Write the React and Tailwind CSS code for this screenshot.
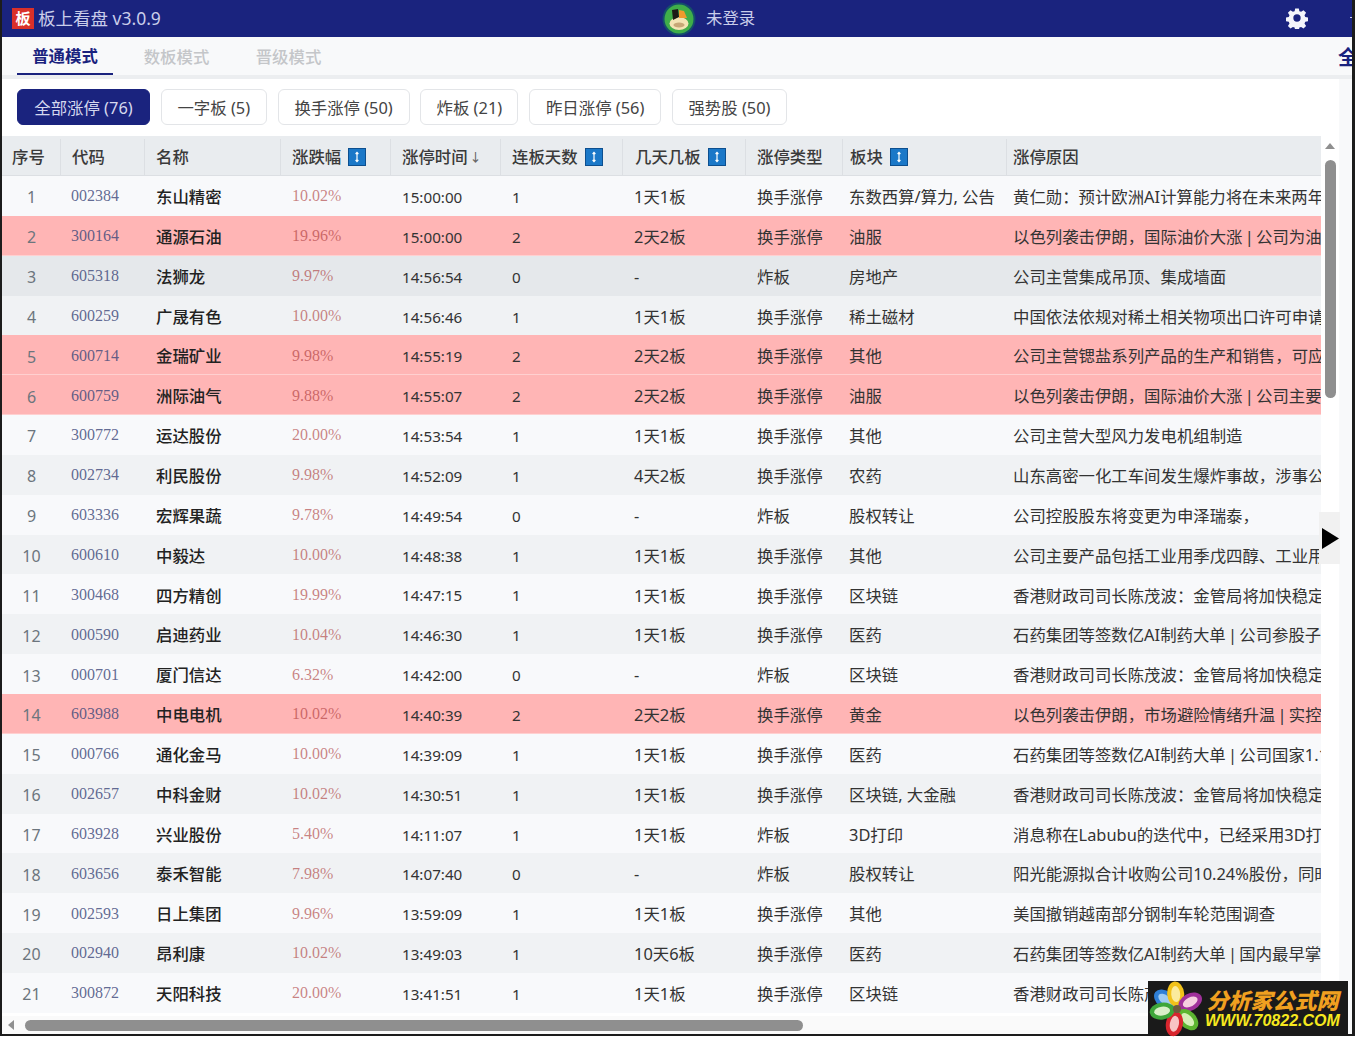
import React from 'react';

const COLS = 'grid grid-cols-[59px_84px_136px_110px_110px_122px_123px_97px_164px_314px]';

const rows = [
  [1, '002384', '东山精密', '10.02%', '15:00:00', 1, '1天1板', '换手涨停', '东数西算/算力, 公告', '黄仁勋：预计欧洲AI计算能力将在未来两年增长十倍'],
  [2, '300164', '通源石油', '19.96%', '15:00:00', 2, '2天2板', '换手涨停', '油服', '以色列袭击伊朗，国际油价大涨 | 公司为油服企业'],
  [3, '605318', '法狮龙', '9.97%', '14:56:54', 0, '-', '炸板', '房地产', '公司主营集成吊顶、集成墙面'],
  [4, '600259', '广晟有色', '10.00%', '14:56:46', 1, '1天1板', '换手涨停', '稀土磁材', '中国依法依规对稀土相关物项出口许可申请进行审批'],
  [5, '600714', '金瑞矿业', '9.98%', '14:55:19', 2, '2天2板', '换手涨停', '其他', '公司主营锶盐系列产品的生产和销售，可应用于'],
  [6, '600759', '洲际油气', '9.88%', '14:55:07', 2, '2天2板', '换手涨停', '油服', '以色列袭击伊朗，国际油价大涨 | 公司主要从事'],
  [7, '300772', '运达股份', '20.00%', '14:53:54', 1, '1天1板', '换手涨停', '其他', '公司主营大型风力发电机组制造'],
  [8, '002734', '利民股份', '9.98%', '14:52:09', 1, '4天2板', '换手涨停', '农药', '山东高密一化工车间发生爆炸事故，涉事公司停产'],
  [9, '603336', '宏辉果蔬', '9.78%', '14:49:54', 0, '-', '炸板', '股权转让', '公司控股股东将变更为申泽瑞泰，'],
  [10, '600610', '中毅达', '10.00%', '14:48:38', 1, '1天1板', '换手涨停', '其他', '公司主要产品包括工业用季戊四醇、工业用甲醛'],
  [11, '300468', '四方精创', '19.99%', '14:47:15', 1, '1天1板', '换手涨停', '区块链', '香港财政司司长陈茂波：金管局将加快稳定币发牌'],
  [12, '000590', '启迪药业', '10.04%', '14:46:30', 1, '1天1板', '换手涨停', '医药', '石药集团等签数亿AI制药大单 | 公司参股子公司'],
  [13, '000701', '厦门信达', '6.32%', '14:42:00', 0, '-', '炸板', '区块链', '香港财政司司长陈茂波：金管局将加快稳定币发牌'],
  [14, '603988', '中电电机', '10.02%', '14:40:39', 2, '2天2板', '换手涨停', '黄金', '以色列袭击伊朗，市场避险情绪升温 | 实控人变更'],
  [15, '000766', '通化金马', '10.00%', '14:39:09', 1, '1天1板', '换手涨停', '医药', '石药集团等签数亿AI制药大单 | 公司国家1.1类新药'],
  [16, '002657', '中科金财', '10.02%', '14:30:51', 1, '1天1板', '换手涨停', '区块链, 大金融', '香港财政司司长陈茂波：金管局将加快稳定币发牌'],
  [17, '603928', '兴业股份', '5.40%', '14:11:07', 1, '1天1板', '炸板', '3D打印', '消息称在Labubu的迭代中，已经采用3D打印技术'],
  [18, '603656', '泰禾智能', '7.98%', '14:07:40', 0, '-', '炸板', '股权转让', '阳光能源拟合计收购公司10.24%股份，同时实控人'],
  [19, '002593', '日上集团', '9.96%', '13:59:09', 1, '1天1板', '换手涨停', '其他', '美国撤销越南部分钢制车轮范围调查'],
  [20, '002940', '昂利康', '10.02%', '13:49:03', 1, '10天6板', '换手涨停', '医药', '石药集团等签数亿AI制药大单 | 国内最早掌握该技术'],
  [21, '300872', '天阳科技', '20.00%', '13:41:51', 1, '1天1板', '换手涨停', '区块链', '香港财政司司长陈茂波：金管局将加快稳定币发牌'],
];

const PINK = [2, 5, 6, 14];

const filters = [
  ['全部涨停 (76)', 'w-[133px]', true],
  ['一字板 (5)', 'w-[106px]'],
  ['换手涨停 (50)', 'w-[132px]'],
  ['炸板 (21)', 'w-[98px]'],
  ['昨日涨停 (56)', 'w-[132px]'],
  ['强势股 (50)', 'w-[115px]'],
];

const SortIcon = () => (
  <svg width="18" height="18" viewBox="0 0 18 18" className="ml-[7px] shrink-0 -mt-[2px]">
    <rect x="0.5" y="0.5" width="17" height="17" fill="#1b78c8" stroke="#0d4f8f" />
    <path d="M9 4.5V13.5M7.6 6 9 4.5 10.4 6M7.6 12 9 13.5 10.4 12" fill="none" stroke="#fff" strokeWidth="1.2" />
  </svg>
);

const Gear = () => (
  <svg width="22" height="22" viewBox="0 0 24 24" fill="#f4f5fb">
    <path fillRule="evenodd" d="M10 1.5h4l.6 3 1.9.8 2.6-1.7 2.8 2.8-1.7 2.6.8 1.9 3 .6v4l-3 .6-.8 1.9 1.7 2.6-2.8 2.8-2.6-1.7-1.9.8-.6 3h-4l-.6-3-1.9-.8-2.6 1.7-2.8-2.8 1.7-2.6-.8-1.9-3-.6v-4l3-.6.8-1.9-1.7-2.6 2.8-2.8 2.6 1.7 1.9-.8zM12 8a4 4 0 1 0 0 8 4 4 0 0 0 0-8z" />
  </svg>
);

const Avatar = () => (
  <svg width="34" height="34" viewBox="0 0 34 34">
    <circle cx="17" cy="17" r="16.5" fill="#14506a" />
    <circle cx="17" cy="17" r="14.5" fill="#3fae49" />
    <ellipse cx="17" cy="21.5" rx="9.5" ry="6.5" fill="#f3e3b4" />
    <path d="M10 8l6-1 1 8-6 3z" fill="#1c1a16" />
    <path d="M17 8l5 1 3 7-8 0z" fill="#ef9a2d" />
    <ellipse cx="17" cy="23" rx="5.5" ry="2.6" fill="#c7a777" />
  </svg>
);

const Flower = () => (
  <svg width="56" height="56" viewBox="-28 -28 56 56" className="shrink-0">
    {[
      [-52, '#2f7fd6', '#9ecbf2'],
      [-5, '#f2c21a', '#fbeb9c'],
      [62, '#a0309a', '#f6cfe0'],
      [135, '#5cb531', '#d6efb8'],
      [190, '#d8262e', '#f8c4c4'],
      [262, '#3ea63a', '#d9f0c8'],
    ].map(([angle, outer, inner]) => (
      <g key={angle} transform={`rotate(${angle})`}>
        <ellipse cx="0" cy="-15" rx="8.5" ry="12.5" fill={outer} />
        <ellipse cx="0" cy="-15" rx="4.5" ry="8" fill={inner} />
      </g>
    ))}
    <circle r="4" fill="#6d5b3d" />
  </svg>
);

export default function App() {
  return (
    <div className="relative w-[1358px] h-[1039px] overflow-hidden bg-white font-['Noto_Sans','Noto_Sans_CJK_SC',sans-serif] text-[16.4px] text-[#333]">
      <div className="relative flex flex-col w-[1355px] h-[1036px] border-l-2 border-r-[3px] border-b-2 border-[#1c1c1c] overflow-hidden">
        {/* Title bar */}
        <div className="flex items-center h-[37px] shrink-0 bg-[#1a237e] text-[#c9cdea]">
          <div className="flex items-center w-[660px] pl-[10px] pb-[1px]">
            <span className="flex items-center justify-center w-[22px] h-[21px] bg-[#d9302a] text-white text-[15px] font-bold leading-none">板</span>
            <span className="ml-[4px] text-[17.5px] whitespace-nowrap">板上看盘 v3.0.9</span>
          </div>
          <Avatar />
          <span className="ml-[10px]">未登录</span>
          <div className="flex-1 flex justify-end items-center pb-[2px]">
            <Gear />
            <span className="ml-[42px] w-[2px] h-[1px] bg-[#c9cdea]" />
          </div>
        </div>

        {/* Mode tabs */}
        <div className="flex h-[38px] shrink-0 pl-[15px] gap-[15px] bg-[#f8f9fa] font-medium">
          <div className="w-[96px] pt-[3px] flex items-center justify-center text-[#1a237e] border-b-2 border-[#1a237e] font-bold">普通模式</div>
          <div className="w-[97px] pt-[3px] flex items-center justify-center text-[#c4c6c9]">数板模式</div>
          <div className="w-[97px] pt-[3px] flex items-center justify-center text-[#c4c6c9]">晋级模式</div>
          <div className="flex-1" />
          <div className="w-[14px] pt-[3px] -ml-[2px] overflow-hidden flex items-center whitespace-nowrap text-[#1a237e] font-bold text-[20px]">全部</div>
        </div>
        <div className="h-[4px] shrink-0 bg-[#eceef0]" />

        <div className="flex flex-1 min-h-0">
          <div className="flex flex-col w-[1337px] bg-white">
            {/* Filters */}
            <div className="flex h-[57px] shrink-0 items-start pt-[10px] pl-[15px] gap-[10.8px]">
              {filters.map(([label, width, active]) => (
                <div
                  key={label}
                  className={`${width} h-[36px] pt-[2px] flex items-center justify-center rounded-[6px] border whitespace-nowrap ${
                    active ? 'bg-[#1a237e] border-[#1a237e] text-[#d5d8ee]' : 'bg-white border-[#e3e5e8] text-[#444]'
                  }`}
                >
                  {label}
                </div>
              ))}
            </div>

            <div className="flex flex-1 min-h-0">
              {/* Table */}
              <div className="w-[1319px] overflow-hidden">
                <div className={`${COLS} h-[40px] pt-[3px] bg-[#e9ecef] shadow-[inset_0_-1px_0_#dcdfe3] font-medium text-[#3a3a3a]`}>
                  <HeaderCell className="pl-[10px]">序号</HeaderCell>
                  <HeaderCell>代码</HeaderCell>
                  <HeaderCell>名称</HeaderCell>
                  <HeaderCell sort>涨跌幅</HeaderCell>
                  <HeaderCell>
                    涨停时间<span className="ml-[2px] text-[12px] text-[#666]">↓</span>
                  </HeaderCell>
                  <HeaderCell sort>连板天数</HeaderCell>
                  <HeaderCell sort className="pl-[12px]">几天几板</HeaderCell>
                  <HeaderCell>涨停类型</HeaderCell>
                  <HeaderCell sort className="pl-[7px]">板块</HeaderCell>
                  <HeaderCell last>涨停原因</HeaderCell>
                </div>
                {rows.map((r) => {
                  const pink = PINK.includes(r[0]);
                  const bg = pink
                    ? 'bg-[#ffb5b5] shadow-[inset_0_-1px_0_#ffd0d0]'
                    : r[0] === 3
                      ? 'bg-[#e5e8eb]'
                      : r[0] % 2 === 0
                        ? 'bg-[#f0f2f4]'
                        : 'bg-[#f8f9fb]';
                  return (
                    <div key={r[0]} className={`${COLS} h-[39.85px] pt-[3px] items-center whitespace-nowrap ${bg}`}>
                      <div className="text-center text-[16px] text-[#6c757d]">{r[0]}</div>
                      <div className="pl-[10px] -mt-[2px] text-[16px] font-['Liberation_Serif',serif] text-[#3a4578]/80">{r[1]}</div>
                      <div className="pl-[11px] font-medium text-[#222]">{r[2]}</div>
                      <div className="pl-[11px] -mt-[2px] text-[16px] font-['Liberation_Serif',serif] text-[#a83232]/60">{r[3]}</div>
                      <div className="pl-[11px] text-[15.2px]">{r[4]}</div>
                      <div className="pl-[11px] text-[15.2px]">{r[5]}</div>
                      <div className="pl-[11px]">{r[6]}</div>
                      <div className="pl-[11px]">{r[7]}</div>
                      <div className="pl-[6px]">{r[8]}</div>
                      <div className="pl-[6px] overflow-hidden [word-spacing:-2px]">{r[9]}</div>
                    </div>
                  );
                })}
              </div>

              {/* Vertical scrollbar */}
              <div className="flex flex-1 flex-col items-center pt-[7px]">
                <div className="w-0 h-0 border-x-[5px] border-x-transparent border-b-[6px] border-b-[#8f8f8f]" />
                <div className="mt-[11px] w-[11px] h-[238px] rounded-full bg-[#8f8f8f]" />
              </div>
            </div>

            {/* Horizontal scrollbar */}
            <div className="flex items-center h-[18px] shrink-0 pl-[6px] bg-[#fafafa]">
              <div className="w-0 h-0 border-y-[5px] border-y-transparent border-r-[6px] border-r-[#8f8f8f]" />
              <div className="ml-[11px] w-[778px] h-[11px] rounded-full bg-[#8f8f8f]" />
            </div>
          </div>
          <div className="flex-1 bg-[#f8f9fa]" />
        </div>

        {/* Side panel toggle */}
        <div className="absolute left-[1317px] top-[512px] w-[21px] h-[52px] pl-[2px] flex items-center justify-center bg-[#f1f1f1]">
          <svg width="17" height="21" viewBox="0 0 17 21">
            <path d="M0 0 17 10.5 0 21z" fill="#000" />
          </svg>
        </div>
      </div>

      {/* Watermark */}
      <div className="absolute left-[1148px] top-[981px] w-[200px] h-[55px] flex items-center pl-[1px] bg-[#1a1a1a]">
        <Flower />
        <div className="flex flex-col items-center font-['Liberation_Sans',sans-serif] italic font-bold leading-none">
          <span className="text-[#f0a020] text-[22px] font-['Noto_Sans_CJK_SC',sans-serif] font-black whitespace-nowrap">分析家公式网</span>
          <span className="mt-[3px] text-[#f6e81e] text-[16px] whitespace-nowrap">WWW.70822.COM</span>
        </div>
      </div>
    </div>
  );
}

function HeaderCell({ children, sort, last, className = 'pl-[11px]' }) {
  return (
    <div className={`flex items-center whitespace-nowrap ${last ? '' : 'border-r border-[#dcdfe3]'} ${last ? 'pl-[6px]' : className}`}>
      {children}
      {sort && <SortIcon />}
    </div>
  );
}
